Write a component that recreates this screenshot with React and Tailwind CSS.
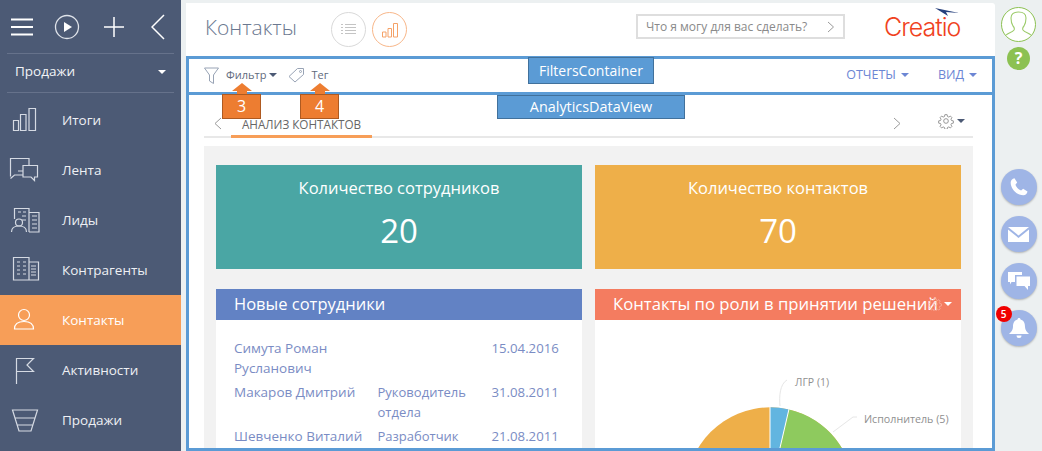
import React from "react";

function Ic({ children, w = 40, h = 36, className = "" }) {
  return (
    <svg width={w} height={h} viewBox={`0 0 ${w} ${h}`} fill="none" stroke="currentColor" strokeWidth="1.2" className={className}>
      {children}
    </svg>
  );
}

const items = [
  ["Итоги", <Ic key="a"><path d="M13.500 18.500h5v10h-5zM20.500 12.500h5.500v16h-5.500zM29 6.500h6.500v22H29z" /></Ic>],
  ["Лента", <Ic key="b"><path d="M29 13V6.500H10.500V24.500M10.500 26.500l4-3.500h8M23 13.500h14.500v11.500h-3v3.500l-3.500-3.500h-8zM18 19h5" /></Ic>],
  ["Лиды", <Ic key="c"><path d="M14.500 17V6.500h14.500V30M29 10.500h10V30H29M32 14h5M32 18h5M32 22h5M32 26h5M18 10h3M23 10h3M22 14h4M22 18h4" /><circle cx="19" cy="20.500" r="3.500" /><path d="M11.500 30c0-4 3-6 7.500-6s7.500 2 7.500 6" /></Ic>],
  ["Контрагенты", <Ic key="d"><path d="M13.500 5.500h15.500v22.500H13.500zM29 10h9.500v18H29M17 10h3M23 10h3M17 14h3M23 14h3M17 18h3M23 18h3M17 22h3M23 22h3M31 14h5M31 17h5M31 20h5M31 23h5" /></Ic>],
  ["Контакты", <Ic key="e"><circle cx="24" cy="13" r="5.500" /><path d="M14.500 27c0-4.500 3-7.500 9.500-7.500s9.500 3 9.500 7.500z" /></Ic>],
  ["Активности", <Ic key="f"><path d="M16.500 6v26M16.500 6.500H33.500L27 13l6.500 6.500h-17" /></Ic>],
  ["Продажи", <Ic key="g"><path d="M12.500 8h25l-6.500 21H19zM15 16h20M17.500 23h15" /></Ic>],
];

function Caret({ className = "" }) {
  return <span className={`inline-block w-0 h-0 border-x-[4px] border-x-transparent border-t-[4px] ${className}`} />;
}

function Gear({ size = 18, className = "" }) {
  return (
    <svg width={size} height={size} viewBox="0 0 24 24" fill="none" stroke="currentColor" strokeWidth="1.300" className={className}>
      <circle cx="12" cy="12" r="3.500" />
      <path d="M10.300 2.500h3.400l.6 2.800 1.900.8 2.400-1.500 2.300 2.400-1.500 2.300.8 1.900 2.800.6v3.400l-2.800.6-.8 1.900 1.500 2.400-2.300 2.300-2.400-1.500-1.900.8-.6 2.800h-3.400l-.6-2.800-1.900-.8-2.400 1.500-2.300-2.300 1.500-2.400-.8-1.900-2.800-.6v-3.400l2.800-.6.8-1.900-1.500-2.300 2.300-2.400 2.400 1.500 1.900-.8z" />
    </svg>
  );
}

function Callout({ n, className }) {
  return (
    <div className={`absolute w-[39px] top-[83px] flex flex-col items-center ${className}`}>
      <div className="w-0 h-0 border-x-[10px] border-x-transparent border-b-[8px] border-b-[#ed7d31]" />
      <div className="w-[10px] h-[3px] bg-[#ed7d31]" />
      <div className="w-[39px] h-[25px] bg-[#ed7d31] border border-[#ae5a21] text-white text-[16px] leading-[23px] text-center">{n}</div>
    </div>
  );
}

function Bubble({ children }) {
  return (
    <div className="relative w-[36px] h-[36px] rounded-full bg-[#9fb5e6] shadow-[0_1px_2px_rgba(0,0,0,0.25)] flex items-center justify-center">
      {children}
    </div>
  );
}

const rows = [
  [["Симута Роман", "Русланович"], [], "15.04.2016", "h-[44px]"],
  [["Макаров Дмитрий"], ["Руководитель", "отдела"], "31.08.2011", "h-[44px]"],
  [["Шевченко Виталий"], ["Разработчик"], "21.08.2011", "h-[30px]"],
];

export default function App() {
  return (
    <div className="w-[1042px] h-[451px] overflow-hidden flex bg-[#ecf0f1] text-[#666] font-['Open_Sans',sans-serif]">
      <aside className="w-[181px] h-[451px] shrink-0 bg-[#4c5a75] text-white flex flex-col">
        <div className="h-[54px] mx-[7px] border-b border-[#66728b] flex items-center pl-[4px]">
          <svg width="22" height="18" viewBox="0 0 22 18" stroke="#fff" strokeWidth="2"><path d="M0 1.500h22M0 9h22M0 16.500h22" /></svg>
          <svg width="26" height="26" viewBox="0 0 26 26" fill="none" stroke="#dfe3ea" strokeWidth="1.300" className="ml-[21px]"><circle cx="13" cy="13" r="11.500" /><path d="M10 8l8 5-8 5z" fill="#fff" stroke="none" /></svg>
          <svg width="20" height="20" viewBox="0 0 20 20" stroke="#fff" strokeWidth="1.500" className="ml-[24px]"><path d="M10 0v20M0 10h20" /></svg>
          <svg width="14" height="26" viewBox="0 0 14 26" fill="none" stroke="#fff" strokeWidth="1.500" className="ml-[27px]"><path d="M13 1L1 13l12 12" /></svg>
        </div>
        <div className="h-[39px] mx-[7px] border-b border-[#66728b] flex items-center justify-between pl-[8px] pr-[8px] pb-[3px] text-[13.500px] text-[#f2f4f7] font-medium">
          <span>Продажи</span>
          <Caret className="border-t-white" />
        </div>
        <div className="flex flex-col pt-[2px]">
          {items.map(([label, icon]) => (
            <div key={label} className={`h-[50px] flex items-center shrink-0 text-[13.500px] font-medium ${label === "Контакты" ? "bg-[#f79e58] text-white" : "text-[#eef0f4]"}`}>
              <div className={`w-[62px] shrink-0 ${label === "Контакты" ? "text-white" : "text-[#d5dae3]"}`}>{icon}</div>
              <span>{label}</span>
            </div>
          ))}
        </div>
      </aside>

      <main className="relative w-[814px] shrink-0 pl-[5px] pt-[3px]">
        <div className="w-[809px] h-[448px] bg-white rounded-tr-[3px]">
          <header className="h-[53px] flex items-center pl-[19px] text-[#6b7890]">
            <h1 className="text-[21px] font-light leading-none w-[126px] -mt-[5px]">Контакты</h1>
            <div className="w-[35px] h-[35px] rounded-full border border-[#d9d9d9] flex items-center justify-center">
              <svg width="15" height="13" viewBox="0 0 15 13" stroke="#c4c4c4" strokeWidth="1"><path d="M0 1.500h2M4 1.500h11M0 4.500h2M4 4.500h11M0 7.500h2M4 7.500h11M0 10.500h2M4 10.500h11" /></svg>
            </div>
            <div className="ml-[6px] w-[35px] h-[35px] rounded-full border border-[#f8b78a] flex items-center justify-center">
              <svg width="16" height="16" viewBox="0 0 16 16" fill="none" stroke="#f5a268" strokeWidth="1"><path d="M.5 10h3.500v5H.5zM6 6.500h3.500V15H6zM11.500 1.500h4V15h-4z" /></svg>
            </div>
            <div className="ml-[229px] -mt-[6px] w-[209px] h-[25px] border-2 border-[#dedede] flex items-center justify-between pl-[8px] pr-[8px] text-[12px] text-[#8a8a8a]">
              <span>Что я могу для вас сделать?</span>
              <svg width="8" height="12" viewBox="0 0 8 12" fill="none" stroke="#9a9a9a" strokeWidth="1"><path d="M1 1l5.500 5L1 11" /></svg>
            </div>
            <div className="relative ml-[39px] -mt-[5px] text-[25px] leading-none font-light tracking-[-1px] text-[#f0421e] font-['Inter',sans-serif]">
              Creatio
              <svg width="24" height="8" viewBox="0 0 24 8" className="absolute right-[1px] top-[-7px]"><path d="M0 0l24 5-13-1 2 4z" fill="#27407c" /></svg>
            </div>
          </header>

          <section className="relative w-[809px] h-[39px] border-3 border-[#5b9bd5] flex items-center justify-between pl-[15px] pr-[15px] pb-[1px]">
            <div className="flex items-center text-[11px] font-medium text-[#5f6a7d]">
              <svg width="15" height="17" viewBox="0 0 15 17" fill="none" stroke="#98a3b5" strokeWidth="1"><path d="M.5 1h14L9.500 8v8.500l-4-2.500V8z" /></svg>
              <span className="ml-[7px]">Фильтр</span>
              <Caret className="ml-[3px] border-t-[#4c5a75]" />
              <svg width="17" height="16" viewBox="0 0 17 16" fill="none" stroke="#98a3b5" strokeWidth="1" className="ml-[11px]"><path d="M1 9.500L9.500 1.500h6v6L7 15z" /><circle cx="12.500" cy="4.500" r="1" /></svg>
              <span className="ml-[6px]">Тег</span>
            </div>
            <div className="flex items-center text-[12.500px] text-[#6c86d4]">
              <span>ОТЧЕТЫ</span>
              <Caret className="ml-[5px] border-t-[#6c86d4]" />
              <span className="ml-[29px]">ВИД</span>
              <Caret className="ml-[5px] border-t-[#6c86d4]" />
            </div>
          </section>

          <section className="w-[809px] h-[356px] border-x-3 border-b-3 border-[#5b9bd5] overflow-hidden">
            <div className="relative h-[43px] ml-[15px] mr-[19px] border-b-2 border-[#e8e8e8] flex items-end">
              <svg width="8" height="13" viewBox="0 0 8 13" fill="none" stroke="#9a9a9a" strokeWidth="1" className="ml-[10px] mb-[6px]"><path d="M7 1L1 6.500 7 12" /></svg>
              <div className="ml-[9px] w-[141px] h-[27px] -mb-[2px] border-b-3 border-[#f79e58] text-[11.700px] text-center text-[#666] leading-[20px] pt-[3px]">АНАЛИЗ КОНТАКТОВ</div>
              <svg width="8" height="13" viewBox="0 0 8 13" fill="none" stroke="#9a9a9a" strokeWidth="1" className="ml-[521px] mb-[6px]"><path d="M1 1l6 5.500L1 12" /></svg>
              <div className="ml-[37px] mb-[7px] flex items-center text-[#8a8a8a]">
                <Gear size={16} />
                <Caret className="ml-[3px] border-t-[#4c5a75]" />
              </div>
            </div>

            <div className="mt-[8px] ml-[15px] mr-[19px] h-[310px] bg-[#f2f2f2] px-[12px] pt-[19px]">
              <div className="grid grid-cols-2 gap-x-[13px] gap-y-[20px]">
                <div className="h-[104px] bg-[#4aa6a4] text-white text-center pt-[12px]">
                  <div className="text-[16.500px] leading-[22px]">Количество сотрудников</div>
                  <div className="text-[33px] leading-[48px] mt-[8px]">20</div>
                </div>
                <div className="h-[104px] bg-[#eeaf49] text-white text-center pt-[12px]">
                  <div className="text-[16.500px] leading-[22px]">Количество контактов</div>
                  <div className="text-[33px] leading-[48px] mt-[8px]">70</div>
                </div>
                <div className="bg-white h-[170px]">
                  <div className="h-[31px] bg-[#6282c4] text-white text-[16.500px] leading-[30px] pl-[18px]">Новые сотрудники</div>
                  <div className="pt-[18px] pl-[18px] text-[13.500px] leading-[20px] text-[#7a8cc4]">
                    {rows.map(([names, roles, date, h]) => (
                      <div key={date} className={`flex ${h}`}>
                        <div className="w-[143.500px]">{names.map((t) => <div key={t}>{t}</div>)}</div>
                        <div className="w-[114px] text-[13px]">{roles.map((t) => <div key={t}>{t}</div>)}</div>
                        <div className="text-[13.200px]">{date}</div>
                      </div>
                    ))}
                  </div>
                </div>
                <div className="bg-white h-[170px]">
                  <div className="relative h-[31px] bg-[#f47c60] text-white text-[16.700px] leading-[30px] pl-[18px] whitespace-nowrap">
                    Контакты по роли в принятии решений
                    <Gear size={14} className="absolute left-[333px] top-[8px] text-[#f9b3a3]" />
                    <Caret className="absolute left-[349px] top-[13px] border-t-white" />
                  </div>
                  <svg width="366" height="130" viewBox="0 0 366 130" className="block font-['Open_Sans',sans-serif]">
                    <circle cx="175" cy="171" r="83.700" fill="#eeaf49" />
                    <path d="M175 171V87.300A83.700 83.700 0 0 1 194 89.500z" fill="#62b5e0" />
                    <path d="M175 171L194 89.500A83.700 83.700 0 0 1 258.700 171z" fill="#8eca5e" />
                    <path d="M175 171V87M175 171L194 89" stroke="#fff" strokeWidth="1" />
                    <path d="M185 86c-1-10 0-22 7-26" fill="none" stroke="#e6e6e6" strokeWidth="1" />
                    <path d="M238 112l20-15h4" fill="none" stroke="#e6e6e6" strokeWidth="1" />
                    <text x="200" y="66" fontSize="10.500" fill="#8f8f8f">ЛГР (1)</text>
                    <text x="269" y="103" fontSize="10.700" fill="#8f8f8f">Исполнитель (5)</text>
                  </svg>
                </div>
              </div>
            </div>
          </section>
        </div>

        <Callout n="3" className="left-[41px]" />
        <Callout n="4" className="left-[119px]" />
        <div className="absolute left-[347px] top-[57px] w-[126px] h-[27px] bg-[#5b9bd5] border border-[#41719c] text-white text-[14px] leading-[25px] text-center">FiltersContainer</div>
        <div className="absolute left-[316px] top-[95px] w-[188px] h-[24px] bg-[#5b9bd5] border border-[#41719c] text-white text-[14.400px] leading-[22px] text-center">AnalyticsDataView</div>
      </main>

      <div className="w-[47px] shrink-0 flex flex-col items-center pt-[7px]">
        <div className="w-[35px] h-[35px] rounded-full border border-[#8cc152] bg-white flex items-center justify-center overflow-hidden">
          <svg width="33" height="33" viewBox="0 0 33 33" fill="none" stroke="#9ccb6b" strokeWidth="1.100"><path d="M2 30c1-5 8-5 10-8 1-2 0-3-1-4-2-3-2-6-2-8 0-4 3-6 7.500-6s7.500 2 7.500 6c0 2 0 5-2 8-1 1-2 2-1 4 2 3 9 3 10 8" /></svg>
        </div>
        <div className="mt-[5px] w-[23px] h-[23px] rounded-full bg-[#8cc152] text-white text-[16px] font-bold leading-[23px] text-center">?</div>
        <div className="mt-[99px] flex flex-col gap-[11px]">
          <Bubble>
            <svg width="20" height="20" viewBox="0 0 24 24" fill="#fff"><path d="M6.600 1.500l3.200 5.200-2.100 2.500c1 2.900 3.700 5.700 6.800 7l2.500-2.100 5.200 3.200c-.4 2.700-2.400 4.700-5 4.700C9 22 2 13.800 2 6.500c0-2.600 2-4.600 4.600-5z" /></svg>
          </Bubble>
          <Bubble>
            <svg width="21" height="15" viewBox="0 0 21 15" fill="#fff"><path d="M0 0h21L10.500 8.500zM0 2.500v12.500h21V2.500L10.500 11z" /></svg>
          </Bubble>
          <Bubble>
            <svg width="22" height="18" viewBox="0 0 22 18" fill="#fff"><path d="M0 0h14v3H7v7H3.500L2 12.500V10H0zM8.500 4.500H22V14h-2v4l-3.500-4h-8z" /></svg>
          </Bubble>
          <Bubble>
            <svg width="20" height="21" viewBox="0 0 20 21" fill="#fff"><path d="M10 0c1 0 1.500.7 1.500 1.500C15 2.500 16 5 16 9c0 3 2 5 4 7H0c2-2 4-4 4-7 0-4 1-6.500 4.500-7.500C8.500.7 9 0 10 0zM7.500 17.500h5a2.500 2.500 0 0 1-5 0z" /></svg>
            <div className="absolute -left-[5px] -top-[4px] w-[16px] h-[16px] rounded-full bg-[#f00000] text-white text-[10px] font-semibold leading-[16px] text-center">5</div>
          </Bubble>
        </div>
      </div>
    </div>
  );
}
